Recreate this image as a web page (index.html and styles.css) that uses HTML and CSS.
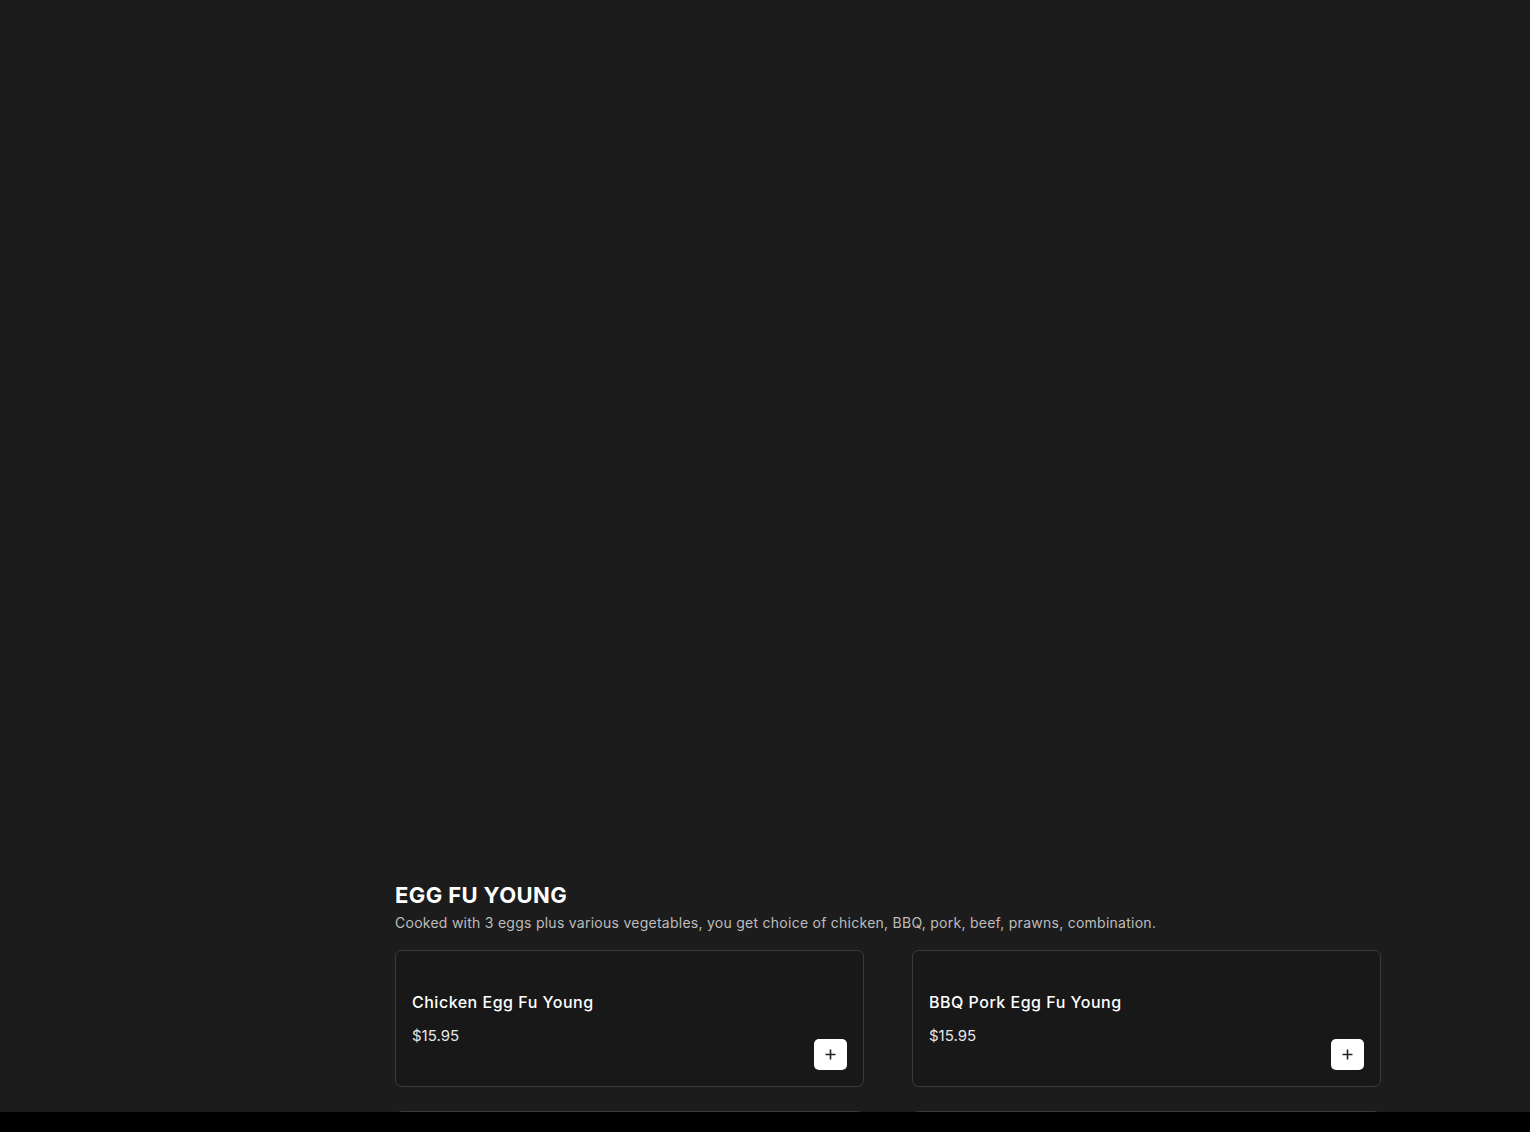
FILE: index.html
```html
<!DOCTYPE html>
<html lang="en">
<head>
<meta charset="utf-8">
<title>Egg Fu Young</title>
<link rel="stylesheet" href="styles.css">
</head>
<body>
<div class="hero"></div>
<main class="menu">
  <section class="category">
    <h2 class="cat-title">EGG FU YOUNG</h2>
    <p class="cat-desc">Cooked with 3 eggs plus various vegetables, you get choice of chicken, BBQ, pork, beef, prawns, combination.</p>
    <div class="grid">
      <article class="card">
        <h3 class="item-name">Chicken Egg Fu Young</h3>
        <div class="item-price">$15.95</div>
        <button class="add" aria-label="Add">
          <svg width="11" height="11" viewBox="0 0 11 11"><path d="M5.5 0.5v10M0.5 5.5h10" stroke="#222" stroke-width="1.6" fill="none"/></svg>
        </button>
      </article>
      <article class="card">
        <h3 class="item-name">BBQ Pork Egg Fu Young</h3>
        <div class="item-price">$15.95</div>
        <button class="add" aria-label="Add">
          <svg width="11" height="11" viewBox="0 0 11 11"><path d="M5.5 0.5v10M0.5 5.5h10" stroke="#222" stroke-width="1.6" fill="none"/></svg>
        </button>
      </article>
      <article class="card">
        <h3 class="item-name">Beef Egg Fu Young</h3>
        <div class="item-price">$15.95</div>
      </article>
      <article class="card">
        <h3 class="item-name">Prawn Egg Fu Young</h3>
        <div class="item-price">$16.95</div>
      </article>
    </div>
  </section>
</main>
<div class="bottom-bar"></div>
</body>
</html>
```

FILE: styles.css
```css
html, body {
  margin: 0;
  padding: 0;
  background: #1c1c1c;
  overflow: hidden;
  height: 1132px;
}
body {
  font-family: "Inter", "Open Sans", sans-serif;
  color: #fff;
}
.hero {
  height: 882px;
}
.menu {
  margin-left: 395px;
  width: 986px;
}
.cat-title {
  margin: 0;
  font-size: 22px;
  line-height: 26px;
  font-weight: 700;
  letter-spacing: 0.4px;
  color: #fff;
}
.cat-desc {
  margin: 6px 0 0;
  font-size: 14px;
  line-height: 18px;
  color: #bdbdbd;
  letter-spacing: 0.26px;
}
.grid {
  margin-top: 18px;
  display: grid;
  grid-template-columns: 1fr 1fr;
  column-gap: 48px;
  row-gap: 24px;
}
.card {
  position: relative;
  height: 137px;
  box-sizing: border-box;
  background: #181818;
  border: 1px solid #3b3b3b;
  border-radius: 7px;
  padding: 40px 16px 0;
}
.item-name {
  margin: 0;
  font-size: 16px;
  line-height: 22px;
  font-weight: 500;
  letter-spacing: 0.5px;
  color: #fff;
}
.item-price {
  margin-top: 13px;
  font-size: 15px;
  line-height: 20px;
  color: #e6e6e6;
}
.add {
  position: absolute;
  right: 16px;
  bottom: 16px;
  width: 33px;
  height: 31px;
  border: none;
  border-radius: 5px;
  background: #fff;
  display: flex;
  align-items: center;
  justify-content: center;
  padding: 0;
  cursor: pointer;
}
.bottom-bar {
  position: fixed;
  left: 0;
  right: 0;
  bottom: 0;
  height: 20px;
  background: #000;
  z-index: 10;
}
```
